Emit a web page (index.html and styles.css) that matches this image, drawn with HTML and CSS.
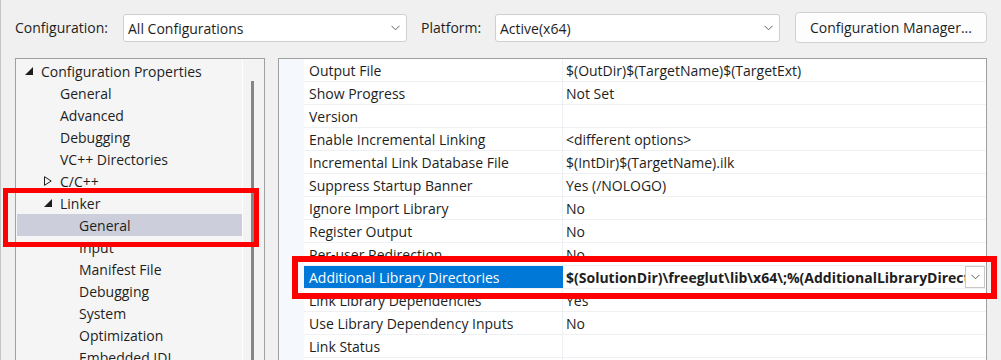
FILE: index.html
```html
<!DOCTYPE html>
<html>
<head>
<meta charset="utf-8">
<link rel="stylesheet" href="styles.css">
</head>
<body>
<div class="window">
  <div class="toolbar">
    <label class="lbl lbl-config">Configuration:</label>
    <div class="combo combo-config">
      <span class="combo-text">All Configurations</span>
      <svg class="chev" width="9" height="6" viewBox="0 0 9 6"><polyline points="0.5,0.8 4.5,4.8 8.5,0.8" fill="none" stroke="#606060" stroke-width="1"/></svg>
    </div>
    <label class="lbl lbl-platform">Platform:</label>
    <div class="combo combo-platform">
      <span class="combo-text">Active(x64)</span>
      <svg class="chev" width="9" height="6" viewBox="0 0 9 6"><polyline points="0.5,0.8 4.5,4.8 8.5,0.8" fill="none" stroke="#606060" stroke-width="1"/></svg>
    </div>
    <button class="btn">Configuration Manager...</button>
  </div>

  <div class="main">
    <div class="tree">
      <div class="tree-list">
        <div class="node l0"><svg class="tw" width="8" height="8" viewBox="0 0 8 8"><polygon points="8,0 8,8 0,8" fill="#1e1e1e"/></svg><span>Configuration Properties</span></div>
        <div class="node l1 leaf">General</div>
        <div class="node l1 leaf">Advanced</div>
        <div class="node l1 leaf">Debugging</div>
        <div class="node l1 leaf">VC++ Directories</div>
        <div class="node l1"><svg class="tw" width="8" height="10" viewBox="0 0 8 10"><polygon points="0.5,0.7 7.2,5 0.5,9.3" fill="none" stroke="#1e1e1e" stroke-width="1"/></svg><span>C/C++</span></div>
        <div class="node l1"><svg class="tw" width="8" height="8" viewBox="0 0 8 8"><polygon points="8,0 8,8 0,8" fill="#1e1e1e"/></svg><span>Linker</span></div>
        <div class="node l2 leaf selected">General</div>
        <div class="node l2 leaf">Input</div>
        <div class="node l2 leaf">Manifest File</div>
        <div class="node l2 leaf">Debugging</div>
        <div class="node l2 leaf">System</div>
        <div class="node l2 leaf">Optimization</div>
        <div class="node l2 leaf">Embedded IDL</div>
      </div>
      <div class="vscroll"><div class="thumb"></div></div>
    </div>

    <div class="grid">
      <div class="gutter"></div>
      <div class="rows">
        <div class="row"><div class="name">Output File</div><div class="value">$(OutDir)$(TargetName)$(TargetExt)</div></div>
        <div class="row"><div class="name">Show Progress</div><div class="value">Not Set</div></div>
        <div class="row"><div class="name">Version</div><div class="value"></div></div>
        <div class="row"><div class="name">Enable Incremental Linking</div><div class="value">&lt;different options&gt;</div></div>
        <div class="row"><div class="name">Incremental Link Database File</div><div class="value">$(IntDir)$(TargetName).ilk</div></div>
        <div class="row"><div class="name">Suppress Startup Banner</div><div class="value">Yes (/NOLOGO)</div></div>
        <div class="row"><div class="name">Ignore Import Library</div><div class="value">No</div></div>
        <div class="row"><div class="name">Register Output</div><div class="value">No</div></div>
        <div class="row"><div class="name">Per-user Redirection</div><div class="value">No</div></div>
        <div class="row active">
          <div class="name">Additional Library Directories</div>
          <div class="value">
            <span class="value-text">$(SolutionDir)\freeglut\lib\x64\;%(AdditionalLibraryDirectories)</span>
            <span class="drop"><svg width="9" height="6" viewBox="0 0 9 6"><polyline points="0.5,0.8 4.5,4.8 8.5,0.8" fill="none" stroke="#606060" stroke-width="1"/></svg></span>
          </div>
        </div>
        <div class="row"><div class="name">Link Library Dependencies</div><div class="value">Yes</div></div>
        <div class="row"><div class="name">Use Library Dependency Inputs</div><div class="value">No</div></div>
        <div class="row"><div class="name">Link Status</div><div class="value"></div></div>
        <div class="row"><div class="name"></div><div class="value"></div></div>
      </div>
    </div>
  </div>

  <div class="mark mark-tree"></div>
  <div class="mark mark-prop"></div>
</div>
</body>
</html>
```

FILE: styles.css
```css
* { box-sizing: border-box; }
html, body {
  margin: 0;
  padding: 0;
  width: 1001px;
  height: 360px;
  overflow: hidden;
  background: #f0f0f0;
}
.window {
  position: relative;
  width: 1001px;
  height: 360px;
  border-left: 1px solid #c4c4c4;
  font-family: "Open Sans", "Noto Sans", sans-serif;
  font-size: 14px;
  color: #1e1e1e;
}

/* toolbar */
.toolbar {
  display: flex;
  align-items: flex-start;
  height: 58px;
  padding: 12px 0 0 14px;
}
.lbl {
  height: 28px;
  line-height: 28px;
  margin-top: 2px;
  white-space: nowrap;
}
.lbl-config { width: 108px; }
.lbl-platform { width: 74px; margin-left: 14px; }
.combo {
  display: flex;
  align-items: center;
  height: 28px;
  margin-top: 2px;
  background: #fff;
  border: 1px solid #cfcfcf;
  border-radius: 3px;
  padding: 0 5px 0 4px;
}
.combo-config { width: 284px; }
.combo-platform { width: 285px; }
.combo-text { flex: 1; white-space: nowrap; }
.chev { display: block; margin-right: 1px; }
.btn {
  margin-left: 15px;
  width: 192px;
  height: 31px;
  background: #fdfdfd;
  border: 1px solid #d0d0d0;
  border-radius: 4px;
  font: inherit;
  color: #1e1e1e;
  padding: 0;
}

/* main */
.main {
  display: flex;
  align-items: flex-start;
  padding-left: 14px;
}
.tree {
  display: flex;
  width: 250px;
  height: 320px;
  background: #f5f5f5;
  border: 1px solid #a0a0a0;
  padding: 1px 0 0 1px;
}
.tree-list {
  width: 225px;
  flex: none;
  border-right: 1px solid #ffffff;
  box-sizing: content-box;
  overflow: hidden;
}
.node {
  display: flex;
  align-items: center;
  height: 22px;
  line-height: 22px;
  padding-top: 1px;
  white-space: nowrap;
}
.tw { display: block; flex: none; margin-right: 8px; margin-top: -1px; }
.node.l0 { padding-left: 8px; }
.node.l1 { padding-left: 27px; }
.node.l2 { padding-left: 46px; }
.node.leaf.l1 { padding-left: 43px; }
.node.leaf.l2 { padding-left: 62px; }
.node.selected { background: #cccedb; }
.vscroll {
  flex: 1;
  background: #f3f3f3;
  padding-top: 21px;
  padding-left: 8px;
}
.thumb {
  width: 3px;
  height: 300px;
  background: #868686;
}

.grid {
  display: flex;
  margin-left: 13px;
  width: 709px;
  height: 330px;
  background: #fff;
  border: 1px solid #a0a0a0;
}
.gutter {
  width: 25px;
  flex: none;
  background: #f5f8fd;
}
.rows {
  flex: 1;
  min-width: 0;
  overflow: hidden;
}
.row {
  display: flex;
  height: 23px;
  border-bottom: 1px solid #eef0f4;
  line-height: 22px;
  white-space: nowrap;
}
.name {
  width: 259px;
  flex: none;
  padding-left: 5px;
  padding-top: 1px;
  border-right: 1px solid #eef0f4;
}
.value {
  flex: 1;
  display: flex;
  align-items: center;
  padding-left: 3px;
  padding-top: 1px;
  overflow: hidden;
  min-width: 0;
}
.row.active .value { padding-top: 0; }
.row.active .value-text { padding-top: 1px; }
.row.active .name {
  background: #0078d7;
  color: #fff;
  border-right-color: #0078d7;
}
.value-text {
  flex: 1;
  min-width: 0;
  overflow: hidden;
  font-weight: bold;
}
.drop {
  flex: none;
  display: flex;
  align-items: center;
  justify-content: center;
  width: 20px;
  height: 22px;
  margin-right: 1px;
  background: #fff;
  border: 1px solid #c8c8c8;
}
.drop svg { display: block; }

/* annotation marks */
.mark {
  position: absolute;
  border: 5px solid #ff0000;
}
.mark-tree { left: 2px; top: 188px; width: 256px; height: 59px; }
.mark-prop { left: 291px; top: 256px; width: 705px; height: 43px; border-width: 6px; }
```
